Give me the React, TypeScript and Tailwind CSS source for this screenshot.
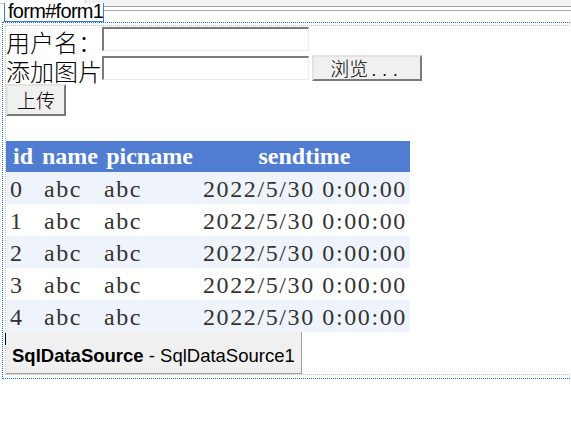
import React from 'react';

const rows = [0, 1, 2, 3, 4].map((id) => ({
  id,
  name: 'abc',
  picname: 'abc',
  sendtime: '2022/5/30 0:00:00',
}));

const TextBox = ({ className }: { className?: string }) => (
  <input
    readOnly
    className={`h-[24px] w-[207px] border-t-2 border-l-2 border-r border-b border-t-[#7a7a7a] border-l-[#7a7a7a] border-r-[#ececec] border-b-[#ececec] bg-white outline-none ${className ?? ''}`}
  />
);

export default function App() {
  return (
    <div className="relative h-[429px] w-[571px] overflow-hidden bg-white font-['Liberation_Serif',serif] text-black">
      {/* designer chrome */}
      <div className="relative h-[22px]">
        <div className="flex h-[7px]">
          <div className="h-[4px] w-[86px] border-r border-b border-[#cfcfcf] bg-white" />
          <div className="flex-1 border-b border-[#a0a0a0] bg-[#f3f3f3]" />
        </div>
        <div className="ml-[103px] h-[4px] border-b border-[#a8a8a8]" />
        <div className="absolute left-[4px] top-[3px] h-[19px] w-[100px] overflow-hidden border-x border-b border-[#3d7ed6] bg-white">
          <span className="absolute left-[3px] top-[-2px] font-['Liberation_Sans',sans-serif] text-[20px] leading-[20px] tracking-[-0.7px]">
            form#form1
          </span>
        </div>
      </div>

      <div className="ml-[2px] w-[620px] border-t border-l border-b border-dotted border-[#1a6ad8] pt-[2px] pb-[3px] pl-[2px]">
        <div className="border-t border-l border-b border-dotted border-[#bdbdbd]">
          <div className="flex h-[28px] items-start">
            <span className="mt-[4px] w-[96px] font-['Noto_Sans_CJK_SC',sans-serif] text-[24px] font-light leading-[24px]">
              用户名：
            </span>
            <TextBox className="mt-[1px]" />
          </div>

          <div className="flex h-[29px] items-start">
            <span className="mt-[5px] w-[96px] font-['Noto_Sans_CJK_SC',sans-serif] text-[24px] font-light leading-[24px]">
              添加图片
            </span>
            <TextBox className="mt-[2px]" />
            <button className="mt-[1px] ml-[3px] flex h-[26px] w-[110px] items-center justify-center border-2 border-t-[#e3e3e3] border-l-[#e3e3e3] border-r-[#7a7a7a] border-b-[#7a7a7a] bg-[#f0f0f0] font-['Noto_Sans_CJK_SC',sans-serif] text-[19px] font-light leading-[20px]">
              浏览<span className="pl-[3px] tracking-[6px]">...</span>
            </button>
          </div>

          <button className="mt-[1px] flex h-[32px] w-[60px] items-center justify-center border-2 border-t-[#e3e3e3] border-l-[#e3e3e3] border-r-[#7a7a7a] border-b-[#7a7a7a] bg-[#f0f0f0] font-['Noto_Sans_CJK_SC',sans-serif] text-[19px] font-light leading-[20px]">
            上传
          </button>

          <div className="mt-[25px] w-[404px]">
            <div className="grid h-[31px] grid-cols-[34px_60px_99px_211px] bg-[#507cd1] text-center text-[24px] font-bold leading-[31px] text-white">
              <span>id</span>
              <span>name</span>
              <span>picname</span>
              <span>sendtime</span>
            </div>
            {rows.map((r, i) => (
              <div
                key={r.id}
                className={`grid h-[32px] grid-cols-[34px_60px_99px_211px] pt-[2px] text-[24px] leading-[30px] tracking-[1.6px] text-[#333333] ${i % 2 === 0 ? 'bg-[#eff3fb]' : 'bg-white'}`}
              >
                <span className="px-[4px]">{r.id}</span>
                <span className="px-[4px]">{r.name}</span>
                <span className="px-[4px]">{r.picname}</span>
                <span className="whitespace-nowrap px-[4px]">{r.sendtime}</span>
              </div>
            ))}
          </div>

          <div className="relative h-[42px] w-[296px] border-r border-b border-[#a0a0a0] bg-[#f0f0f0] pt-[14px] pl-[6px] font-['Liberation_Sans',sans-serif] text-[18.5px] leading-[20px]">
            <span className="absolute top-[1px] left-[-1px] h-[12px] w-px bg-black" />
            <b>SqlDataSource</b> - SqlDataSource1
          </div>
        </div>
      </div>
    </div>
  );
}
